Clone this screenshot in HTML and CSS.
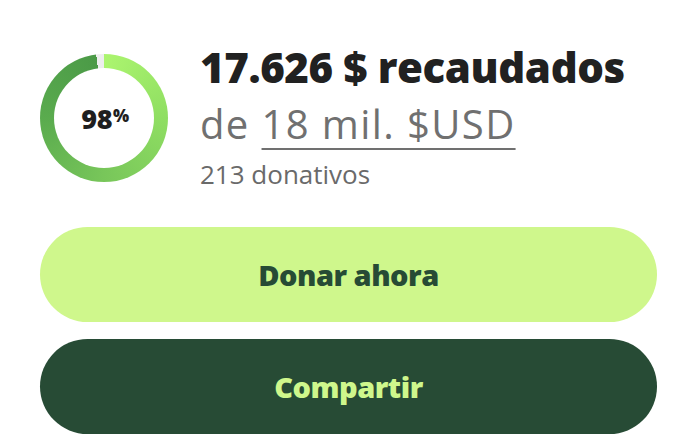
FILE: index.html
```html
<!DOCTYPE html>
<html lang="es">
<head>
<meta charset="utf-8">
<title>Donativos</title>
<link rel="stylesheet" href="styles.css">
</head>
<body>
<section class="progress-card">
  <div class="summary">
    <div class="ring">
      <div class="ring-hole">
        <span class="ring-value">98<sup class="pct">%</sup></span>
      </div>
    </div>
    <div class="amounts">
      <h1 class="raised">17.626 $ recaudados</h1>
      <p class="goal">de <a class="goal-link" href="#">18 mil. $USD</a></p>
      <p class="count">213 donativos</p>
    </div>
  </div>
  <div class="actions">
    <button class="btn btn-donate" type="button">Donar ahora</button>
    <button class="btn btn-share" type="button">Compartir</button>
  </div>
</section>
</body>
</html>
```
FILE: styles.css
```css
* {
  box-sizing: border-box;
}

body {
  margin: 0;
  background: #ffffff;
  font-family: "Open Sans", Lato, sans-serif;
  color: #232323;
}

.progress-card {
  width: 657px;
  padding: 0 0 0 40px;
}

.summary {
  display: flex;
  align-items: flex-start;
  gap: 32px;
  padding-top: 39px;
}

/* donut: 98% progress over a light track */
.ring {
  flex: none;
  width: 128px;
  height: 128px;
  margin-top: 15px;
  border-radius: 50%;
  background:
    conic-gradient(#acf56f 0deg, #8fde62 90deg, #78c65a 180deg, #5aab4e 270deg, #4b9a47 353deg, #eeeeee 353deg, #eeeeee 360deg);
  display: flex;
  align-items: center;
  justify-content: center;
}

.ring-hole {
  width: 100px;
  height: 100px;
  border-radius: 50%;
  background: #ffffff;
  display: flex;
  align-items: center;
  justify-content: center;
}

.ring-value {
  font-weight: 800;
  font-size: 27px;
  line-height: 1;
  color: #1f1f1f;
  letter-spacing: -0.5px;
  margin-left: 2px;
}

.pct {
  font-size: 17px;
  vertical-align: 7px;
  line-height: 0;
  margin-left: 1px;
}

.amounts {
  display: flex;
  flex-direction: column;
}

.raised {
  margin: 0;
  font-size: 42px;
  font-weight: 800;
  line-height: 56px;
  letter-spacing: -0.4px;
  color: #212121;
}

.goal {
  margin: 0;
  font-size: 40px;
  line-height: 57px;
  letter-spacing: 1.4px;
  color: #707070;
  font-weight: 400;
}

.goal-link {
  color: #707070;
  text-decoration: underline;
  text-decoration-thickness: 2px;
  text-underline-offset: 9px;
}

.count {
  margin: 0;
  font-size: 26px;
  line-height: 44px;
  color: #6a6a6a;
}

.actions {
  display: flex;
  flex-direction: column;
  gap: 17px;
  margin-top: 31px;
}

.btn {
  height: 95px;
  border: none;
  border-radius: 48px;
  font-family: "Open Sans", Lato, sans-serif;
  font-size: 29px;
  font-weight: 800;
  letter-spacing: -0.5px;
  cursor: pointer;
}

.btn-donate {
  background: #cff78c;
  color: #274b35;
}

.btn-share {
  background: #274b35;
  color: #cff78c;
}
```
